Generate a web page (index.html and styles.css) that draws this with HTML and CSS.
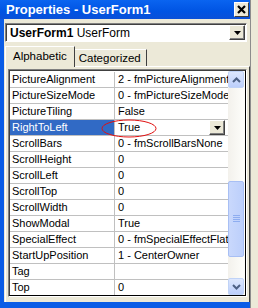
FILE: index.html
```html
<html lang="en">
<head>
  <meta charset="UTF-8">
  <title>Properties - UserForm1</title>
  <link rel="stylesheet" href="styles.css">
</head>
<body>
  <div class="window">
    <div class="titlebar">
      <span class="title">Properties - UserForm1</span>
      <button class="close-btn">
        <svg width="9" height="9" viewBox="0 0 9 9">
          <path d="M1 1 L8 8 M8 1 L1 8" stroke="#000" stroke-width="2.2"/>
        </svg>
      </button>
    </div>
    <div class="body">
      <div class="combo">
        <span class="combo-text"><b>UserForm1</b> UserForm</span>
        <span class="combo-btn">
          <svg width="7" height="4" viewBox="0 0 7 4"><path d="M0 0 H7 L3.5 4 Z" fill="#000"/></svg>
        </span>
      </div>
      <div class="tabs">
        <div class="tab active">Alphabetic</div>
        <div class="tab">Categorized</div>
      </div>
      <div class="panel">
        <div class="grid">
          <div class="grid-inner">
            <div class="rows">
              <div class="row"><div class="name">PictureAlignment</div><div class="value">2 - fmPictureAlignmentCenter</div></div>
              <div class="row"><div class="name">PictureSizeMode</div><div class="value">0 - fmPictureSizeModeClip</div></div>
              <div class="row"><div class="name">PictureTiling</div><div class="value">False</div></div>
              <div class="row selected">
                <div class="name">RightToLeft</div>
                <div class="value editing">
                  <span>True</span>
                  <span class="cell-btn">
                    <svg width="7" height="4" viewBox="0 0 7 4"><path d="M0 0 H7 L3.5 4 Z" fill="#000"/></svg>
                  </span>
                </div>
              </div>
              <div class="row"><div class="name">ScrollBars</div><div class="value">0 - fmScrollBarsNone</div></div>
              <div class="row"><div class="name">ScrollHeight</div><div class="value">0</div></div>
              <div class="row"><div class="name">ScrollLeft</div><div class="value">0</div></div>
              <div class="row"><div class="name">ScrollTop</div><div class="value">0</div></div>
              <div class="row"><div class="name">ScrollWidth</div><div class="value">0</div></div>
              <div class="row"><div class="name">ShowModal</div><div class="value">True</div></div>
              <div class="row"><div class="name">SpecialEffect</div><div class="value">0 - fmSpecialEffectFlat</div></div>
              <div class="row"><div class="name">StartUpPosition</div><div class="value">1 - CenterOwner</div></div>
              <div class="row"><div class="name">Tag</div><div class="value"></div></div>
              <div class="row"><div class="name">Top</div><div class="value">0</div></div>
              <svg class="mark" width="56" height="19" viewBox="0 0 56 19">
                <ellipse cx="28" cy="9.5" rx="27" ry="8.5" fill="none" stroke="#e01010" stroke-width="1"/>
              </svg>
            </div>
            <div class="scrollbar">
              <div class="sb-btn">
                <svg width="9" height="6" viewBox="0 0 9 6"><path d="M1 5 L4.5 1.5 L8 5" fill="none" stroke="#4d6185" stroke-width="2"/></svg>
              </div>
              <div class="sb-track">
                <div class="sb-thumb">
                  <svg width="7" height="8" viewBox="0 0 7 8"><path d="M0 0.5 H7 M0 2.5 H7 M0 4.5 H7 M0 6.5 H7" stroke="#8eadf0" stroke-width="1"/></svg>
                </div>
              </div>
              <div class="sb-btn">
                <svg width="9" height="6" viewBox="0 0 9 6"><path d="M1 1 L4.5 4.5 L8 1" fill="none" stroke="#4d6185" stroke-width="2"/></svg>
              </div>
            </div>
          </div>
        </div>
      </div>
    </div>
  </div>
</body>
</html>
```

FILE: styles.css
```css
body {
  margin: 0;
  padding: 0;
  width: 258px;
  height: 308px;
  overflow: hidden;
  background-color: #ece9d8;
  font-family: "Liberation Sans", Arial, sans-serif;
  font-size: 11px;
}

.window {
  width: 250px;
  height: 302px;
  background-color: #0a5ce6;
  padding: 0 0 6px 0;
  border-right: 1px solid #8c8c8c;
  display: flex;
  flex-direction: column;
}

.titlebar {
  height: 19px;
  flex-shrink: 0;
  display: flex;
  align-items: center;
  justify-content: space-between;
  padding: 0 1px 0 6px;
  background: linear-gradient(#0a64f0, #0054e3 60%, #0a50d8);
}

.title {
  color: #fff;
  font-weight: bold;
  font-size: 13px;
}

.close-btn {
  width: 15px;
  height: 15px;
  padding: 0;
  border: 1px solid;
  border-color: #fff #404040 #404040 #fff;
  background-color: #ece9d8;
  display: flex;
  align-items: center;
  justify-content: center;
}

.body {
  flex: 1;
  min-height: 0;
  margin-left: 4px;
  background-color: #ece9d8;
  display: flex;
  flex-direction: column;
  padding: 4px 0 0 1px;
}

.combo {
  width: 242px;
  height: 19px;
  flex-shrink: 0;
  box-sizing: border-box;
  border: 1px solid;
  border-color: #808080 #fff #fff #808080;
  box-shadow: inset 1px 1px 0 #404040;
  background-color: #fff;
  display: flex;
  align-items: center;
  justify-content: space-between;
  padding: 0 1px 0 4px;
  font-size: 12px;
}

.combo-btn, .cell-btn {
  width: 16px;
  height: 15px;
  flex-shrink: 0;
  box-sizing: border-box;
  border: 1px solid;
  border-color: #fff #404040 #404040 #fff;
  box-shadow: inset -1px -1px 0 #808080;
  background-color: #ece9d8;
  display: flex;
  align-items: center;
  justify-content: center;
}

.tabs {
  display: flex;
  align-items: flex-end;
  margin-top: 4px;
  height: 20px;
  flex-shrink: 0;
}

.tab {
  height: 17px;
  box-sizing: border-box;
  padding: 2px 5px 0 4px;
  border: 1px solid;
  border-bottom: none;
  border-left: none;
  border-color: #fff #404040 #fff #fff;
  font-size: 11.5px;
}

.tab.active {
  height: 21px;
  margin-bottom: -1px;
  padding: 3px 7px 0 7px;
  border-left: 1px solid #fff;
  position: relative;
  background-color: #ece9d8;
}

.panel {
  flex: 1;
  min-height: 0;
  border-left: 1px solid #fff;
  border-top: 1px solid #fff;
  border-right: 1px solid #404040;
  padding: 2px 2px 5px 2px;
  display: flex;
}

.grid {
  flex: 1;
  min-width: 0;
  border: 1px solid;
  border-color: #808080 #fff #fff #808080;
  display: flex;
}

.grid-inner {
  flex: 1;
  min-width: 0;
  border: 1px solid;
  border-color: #404040 #000 #000 #404040;
  background-color: #fff;
  display: flex;
  overflow: hidden;
}

.rows {
  flex: 1;
  min-width: 0;
  position: relative;
  overflow: hidden;
  padding-top: 1px;
}

.row {
  display: flex;
  height: 16px;
  box-sizing: border-box;
  border-bottom: 1px solid #c0c0c0;
  line-height: 15px;
  white-space: nowrap;
}

.name {
  width: 102px;
  padding-left: 2px;
  border-right: 1px solid #c0c0c0;
  flex-shrink: 0;
}

.value {
  flex: 1;
  min-width: 0;
  padding-left: 3px;
  overflow: hidden;
}

.selected .name {
  background-color: #316ac5;
  color: #fff;
}

.value.editing {
  display: flex;
  justify-content: space-between;
  padding-right: 3px;
}

.mark {
  position: absolute;
  left: 91px;
  top: 48px;
}

.scrollbar {
  width: 17px;
  flex-shrink: 0;
  display: flex;
  flex-direction: column;
  background: linear-gradient(to right, #f3f1ec, #fefefb);
}

.sb-btn {
  height: 17px;
  flex-shrink: 0;
  box-sizing: border-box;
  margin: 0 1px 0 0;
  border: 1px solid #c0d3f7;
  border-radius: 2px;
  background: linear-gradient(#dde7fd, #bccffb);
  display: flex;
  align-items: center;
  justify-content: center;
}

.sb-track {
  flex: 1;
  display: flex;
  flex-direction: column;
  justify-content: flex-end;
  padding-bottom: 21px;
}

.sb-thumb {
  height: 76px;
  margin-right: 1px;
  box-sizing: border-box;
  border: 1px solid #a8bff4;
  border-radius: 2px;
  background: linear-gradient(to right, #c9d8fc, #bccffb);
  display: flex;
  align-items: center;
  justify-content: center;
}
```
